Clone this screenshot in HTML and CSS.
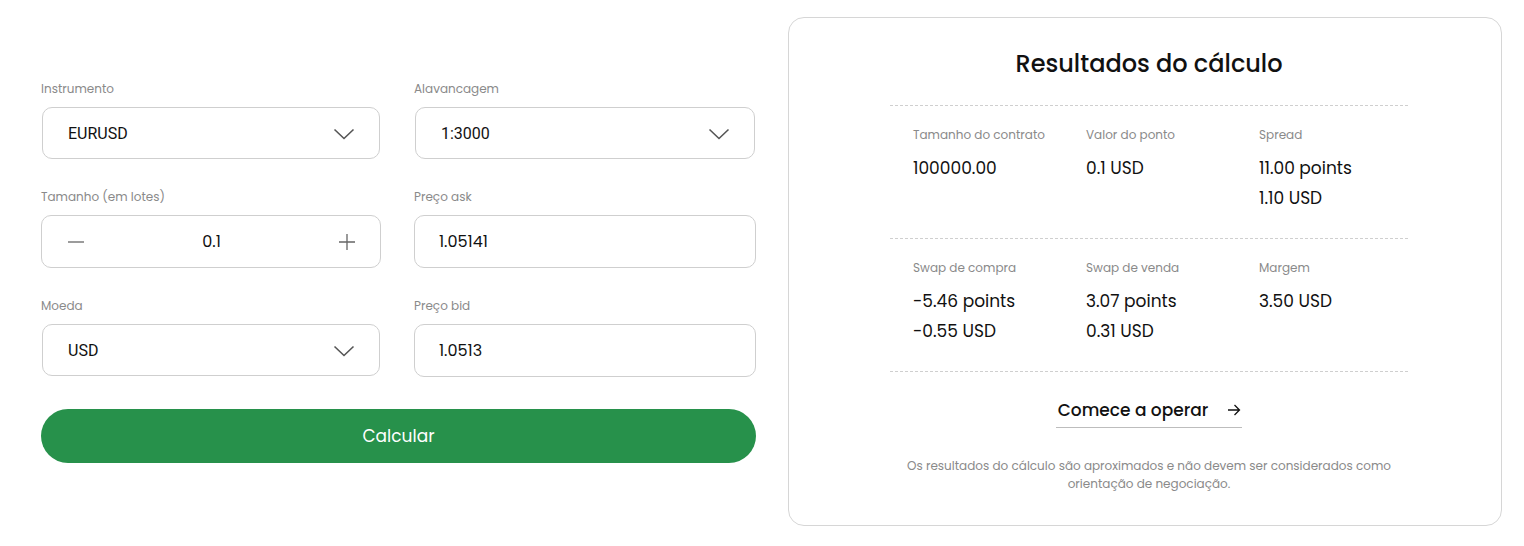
FILE: index.html
```html
<!DOCTYPE html>
<html lang="pt">
<head>
<meta charset="utf-8">
<title>Calculadora</title>
<link rel="stylesheet" href="styles.css">
</head>
<body>
<div class="page">
  <form class="calc">
    <div class="grid">
      <div class="field">
        <label class="label">Instrumento</label>
        <div class="box select">
          <span class="sel-text">EURUSD</span>
          <svg class="chev" width="22" height="12" viewBox="0 0 22 12"><path d="M1.5 1.5 L11 10.5 L20.5 1.5" fill="none" stroke="#555" stroke-width="1.6"/></svg>
        </div>
      </div>
      <div class="field">
        <label class="label">Alavancagem</label>
        <div class="box select">
          <span class="sel-text">1:3000</span>
          <svg class="chev" width="22" height="12" viewBox="0 0 22 12"><path d="M1.5 1.5 L11 10.5 L20.5 1.5" fill="none" stroke="#555" stroke-width="1.6"/></svg>
        </div>
      </div>
      <div class="field">
        <label class="label">Tamanho (em lotes)</label>
        <div class="box stepper">
          <svg class="step" width="16" height="16" viewBox="0 0 16 16"><path d="M0 8 H16" stroke="#666" stroke-width="1.3"/></svg>
          <span class="step-val">0.1</span>
          <svg class="step" width="16" height="16" viewBox="0 0 16 16"><path d="M0 8 H16 M8 0 V16" stroke="#666" stroke-width="1.3"/></svg>
        </div>
      </div>
      <div class="field">
        <label class="label">Preço ask</label>
        <div class="box input">1.05141</div>
      </div>
      <div class="field">
        <label class="label">Moeda</label>
        <div class="box select">
          <span class="sel-text">USD</span>
          <svg class="chev" width="22" height="12" viewBox="0 0 22 12"><path d="M1.5 1.5 L11 10.5 L20.5 1.5" fill="none" stroke="#555" stroke-width="1.6"/></svg>
        </div>
      </div>
      <div class="field">
        <label class="label">Preço bid</label>
        <div class="box input">1.0513</div>
      </div>
    </div>
    <button type="button" class="btn">Calcular</button>
  </form>

  <section class="card">
    <h2 class="title">Resultados do cálculo</h2>
    <div class="results">
      <div class="res">
        <div class="r-label">Tamanho do contrato</div>
        <div class="r-val">100000.00</div>
      </div>
      <div class="res">
        <div class="r-label">Valor do ponto</div>
        <div class="r-val">0.1 USD</div>
      </div>
      <div class="res">
        <div class="r-label">Spread</div>
        <div class="r-val">11.00 points</div>
        <div class="r-val">1.10 USD</div>
      </div>
    </div>
    <div class="results">
      <div class="res">
        <div class="r-label">Swap de compra</div>
        <div class="r-val">-5.46 points</div>
        <div class="r-val">-0.55 USD</div>
      </div>
      <div class="res">
        <div class="r-label">Swap de venda</div>
        <div class="r-val">3.07 points</div>
        <div class="r-val">0.31 USD</div>
      </div>
      <div class="res">
        <div class="r-label">Margem</div>
        <div class="r-val">3.50 USD</div>
      </div>
    </div>
    <div class="cta-wrap">
      <a class="cta" href="#">Comece a operar
        <svg width="14" height="12" viewBox="0 0 14 12"><path d="M1 6 H12.5 M7.5 1 L12.5 6 L7.5 11" fill="none" stroke="#111" stroke-width="1.3"/></svg>
      </a>
    </div>
    <p class="note">Os resultados do cálculo são aproximados e não devem ser considerados como orientação de negociação.</p>
  </section>
</div>
</body>
</html>
```
FILE: styles.css
```css
* { box-sizing: border-box; }
html, body { margin: 0; padding: 0; background: #fff; }
body {
  font-family: Poppins, Inter, "Open Sans", sans-serif;
  color: #111;
}
.page {
  display: flex;
  align-items: flex-start;
  padding: 17px 0 0 41px;
  gap: 32px;
}
.calc {
  width: 715px;
  padding-top: 63px;
}
.grid {
  display: grid;
  grid-template-columns: 340px 342px;
  column-gap: 33px;
  row-gap: 29px;
}
.field { display: flex; flex-direction: column; }
.label {
  font-size: 12px;
  color: #8a8a8a;
  height: 18px;
  line-height: 18px;
  margin-bottom: 9px;
}
.box {
  height: 52px;
  border: 1px solid #cfcfcf;
  border-radius: 10px;
  display: flex;
  align-items: center;
  font-size: 16px;
}
.select {
  padding: 0 24px 0 25px;
  justify-content: space-between;
  margin-left: 1px;
  margin-right: 1px;
}
.sel-text {
  font-family: Roboto, "Liberation Sans", sans-serif;
  font-size: 16px;
  color: #111;
}
.chev { display: block; margin-top: 2px; }
.stepper {
  height: 53px;
  padding: 0 25px 0 26px;
  justify-content: space-between;
}
.step { display: block; }
.step-val { font-size: 16px; }
.input {
  height: 53px;
  padding: 0 24px;
}
.grid > .field:nth-child(n+5) .input { height: 53px; }
.btn {
  margin-top: 32px;
  width: 715px;
  height: 54px;
  border: none;
  border-radius: 27px;
  background: #27914b;
  color: #fff;
  font-family: inherit;
  font-size: 17px;
  cursor: pointer;
}
.card {
  width: 714px;
  height: 509px;
  border: 1px solid #d6d6d6;
  border-radius: 16px;
  padding: 30px 93px 0 101px;
}
.title {
  margin: 0;
  text-align: center;
  font-size: 24px;
  font-weight: 500;
  line-height: 32px;
  padding-bottom: 25px;
  border-bottom: 1px dashed #cfcfcf;
}
.results {
  display: grid;
  grid-template-columns: repeat(3, 173px);
  padding: 20px 23px 21px;
  border-bottom: 1px dashed #cfcfcf;
  min-height: 133px;
}
.r-label {
  font-size: 12px;
  color: #8a8a8a;
  line-height: 18px;
  margin-bottom: 9px;
}
.r-val {
  font-size: 17px;
  line-height: 30px;
}
.cta-wrap {
  display: flex;
  justify-content: center;
  padding-top: 25px;
}
.cta {
  display: inline-flex;
  align-items: center;
  gap: 19px;
  color: #111;
  text-decoration: none;
  font-size: 17px;
  font-weight: 500;
  padding: 0 1px 4px 2px;
  border-bottom: 1px solid #bdbdbd;
}
.note {
  margin: 29px 0 0;
  text-align: center;
  font-size: 12px;
  line-height: 18px;
  color: #8a8a8a;
  padding: 0 10px;
}
```
